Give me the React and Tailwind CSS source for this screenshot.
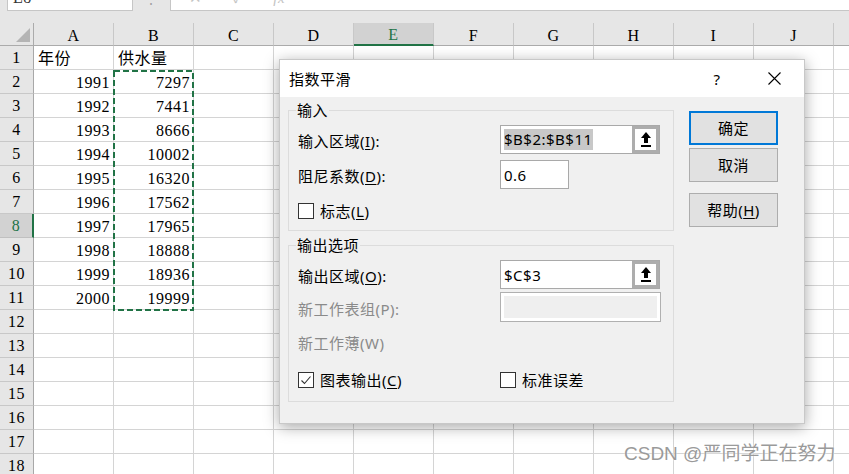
import React from "react";

const COLS = ["A", "B", "C", "D", "E", "F", "G", "H", "I", "J", "K"];
const YEARS = [1991, 1992, 1993, 1994, 1995, 1996, 1997, 1998, 1999, 2000];
const VALUES = [7297, 7441, 8666, 10002, 16320, 17562, 17965, 18888, 18936, 19999];

function cellContent(r, c) {
  if (r === 1 && c === 0) return { t: "年份", left: true };
  if (r === 1 && c === 1) return { t: "供水量", left: true };
  if (r >= 2 && r <= 11 && c === 0) return { t: String(YEARS[r - 2]) };
  if (r >= 2 && r <= 11 && c === 1) return { t: String(VALUES[r - 2]) };
  return null;
}

function Row({ r }) {
  const sel = r === 8;
  return (
    <div className="flex h-[24px] shrink-0">
      <div
        className={
          sel
            ? "w-[34px] shrink-0 flex items-center justify-center bg-[#d2d2d2] text-[#217346] border-b border-b-[#c0c0c0] border-r-2 border-r-[#217346]"
            : "w-[34px] shrink-0 flex items-center justify-center bg-[#e6e6e6] text-black border-b border-b-[#c8c8c8] border-r border-r-[#a8a8a8]"
        }
      >
        {r}
      </div>
      {COLS.map((c, i) => {
        const cc = cellContent(r, i);
        return (
          <div
            key={c}
            className={
              cc && cc.left
                ? "w-[80px] shrink-0 flex items-end justify-start pl-[4px] pb-[1px] border-r border-b border-[#d4d4d4] bg-white"
                : "w-[80px] shrink-0 flex items-end justify-end pr-[3px] pb-[1px] border-r border-b border-[#d4d4d4] bg-white"
            }
          >
            {cc ? cc.t : null}
          </div>
        );
      })}
    </div>
  );
}

function UpButton() {
  return (
    <div className="w-[27px] h-full shrink-0 bg-[#adadad] p-[3px] flex">
      <div className="flex-1 bg-white flex items-center justify-center">
        <svg width="12" height="17" viewBox="0 0 12 17">
          <polygon points="6,1 11,7 1,7" fill="#000" />
          <rect x="4" y="6" width="4" height="6" fill="#000" />
          <rect x="1" y="14" width="10" height="2" fill="#000" />
        </svg>
      </div>
    </div>
  );
}

function CheckBox({ checked }) {
  return (
    <div className="w-[16px] h-[16px] shrink-0 border border-[#333333] bg-white flex items-center justify-center">
      {checked ? (
        <svg width="12" height="12" viewBox="0 0 12 12">
          <polyline points="1.5,6.5 4.5,9.5 10.5,2.5" fill="none" stroke="#333" strokeWidth="1.1" />
        </svg>
      ) : null}
    </div>
  );
}

function Btn({ children, primary }) {
  return (
    <div
      className={
        primary
          ? "w-[89px] h-[34px] bg-[#e1e1e1] border-2 border-[#0078d7] flex items-center justify-center text-[15px] leading-[20px]"
          : "w-[89px] h-[34px] bg-[#e1e1e1] border border-[#adadad] flex items-center justify-center text-[15px] leading-[20px]"
      }
    >
      {children}
    </div>
  );
}

function Dialog() {
  return (
    <div className="absolute left-[279px] top-[59px] w-[526px] h-[365px] border border-[#c8c8c8] bg-[#f0f0f0] shadow-[0_3px_14px_rgba(0,0,0,0.35)] flex flex-col font-['Noto_Sans','Noto_Sans_CJK_SC',sans-serif] text-black">
      <div className="h-[37px] shrink-0 bg-white flex items-center pl-[9px] text-[15px] leading-[20px]">
        <span className="flex-1">指数平滑</span>
        <span className="w-[20px] text-center mr-[41px]">?</span>
        <svg width="13" height="13" viewBox="0 0 13 13" className="mr-[23px]">
          <path d="M0.5 0.5 L12.5 12.5 M12.5 0.5 L0.5 12.5" stroke="#000" strokeWidth="1.1" fill="none" />
        </svg>
      </div>
      <div className="flex pl-[8px] pt-[13px] text-[15px] leading-[20px]">
        <div className="w-[386px] shrink-0 flex flex-col">
          {/* 输入 group */}
          <div className="relative h-[121px] border border-[#dcdcdc] pl-[9px] pt-[14px] flex flex-col">
            <span className="absolute left-[7px] top-[-11px] px-[1px] bg-[#f0f0f0]">输入</span>
            <div className="flex h-[29px] items-center">
              <span className="w-[202px] shrink-0 pt-[3px]">
                输入区域(<span className="underline underline-offset-2">I</span>):
              </span>
              <div className="w-[160px] h-[29px] flex border border-[#a9a9a9] bg-white">
                <div className="flex-1 flex items-center pl-[3px]">
                  <span className="bg-[#c8c8c8] leading-[21px] text-[15px]">$B$2:$B$11</span>
                </div>
                <UpButton />
              </div>
            </div>
            <div className="flex h-[29px] items-center mt-[6px]">
              <span className="w-[202px] shrink-0 pt-[3px]">
                阻尼系数(<span className="underline underline-offset-2">D</span>):
              </span>
              <div className="w-[69px] h-[29px] flex items-center pl-[3px] border border-[#a9a9a9] bg-white">0.6</div>
            </div>
            <div className="flex h-[18px] items-center mt-[13px]">
              <CheckBox />
              <span className="ml-[6px]">
                标志(<span className="underline underline-offset-2">L</span>)
              </span>
            </div>
          </div>
          {/* 输出选项 group */}
          <div className="relative h-[157px] mt-[14px] border border-[#dcdcdc] pl-[9px] pt-[14px] flex flex-col">
            <span className="absolute left-[7px] top-[-11px] px-[1px] bg-[#f0f0f0]">输出选项</span>
            <div className="flex h-[29px] items-center">
              <span className="w-[202px] shrink-0 pt-[3px]">
                输出区域(<span className="underline underline-offset-2">O</span>):
              </span>
              <div className="w-[160px] h-[29px] flex border border-[#a9a9a9] bg-white">
                <div className="flex-1 flex items-center pl-[3px]">$C$3</div>
                <UpButton />
              </div>
            </div>
            <div className="flex h-[30px] items-center mt-[3px]">
              <span className="w-[202px] shrink-0 pt-[3px] text-[#8a8a8a]">新工作表组(P):</span>
              <div className="w-[161px] h-[30px] border border-[#b0b0b0] bg-white p-[3px]">
                <div className="w-full h-full bg-[#efefef]" />
              </div>
            </div>
            <div className="flex h-[29px] items-center mt-[5px]">
              <span className="pt-[3px] text-[#8a8a8a]">新工作薄(W)</span>
            </div>
            <div className="flex h-[18px] items-center mt-[15px]">
              <div className="w-[202px] shrink-0 flex items-center">
                <CheckBox checked />
                <span className="ml-[6px]">
                  图表输出(<span className="underline underline-offset-2">C</span>)
                </span>
              </div>
              <CheckBox />
              <span className="ml-[6px]">标准误差</span>
            </div>
          </div>
        </div>
        <div className="ml-[15px] pt-[1px] flex flex-col">
          <Btn primary>确定</Btn>
          <div className="mt-[3px]">
            <Btn>取消</Btn>
          </div>
          <div className="mt-[11px]">
            <Btn>
              帮助(<span className="underline underline-offset-2">H</span>)
            </Btn>
          </div>
        </div>
      </div>
    </div>
  );
}

export default function App() {
  const rows = Array.from({ length: 18 }, (_, i) => i + 1);
  return (
    <div className="relative w-[849px] h-[474px] overflow-hidden bg-white font-['Liberation_Serif','Noto_Sans_CJK_SC',serif] text-[16px] tracking-[0.5px] leading-[18px] text-black">
      {/* formula bar */}
      <div className="h-[23px] bg-[#e6e6e6] flex items-start">
        <div className="ml-[7px] w-[126px] h-[11px] bg-white border-l border-r border-b border-[#c6c6c6] overflow-hidden">
          <div className="-mt-[11px] pl-[5px] text-[16px] text-[#333]">E8</div>
        </div>
        <div className="w-[37px] h-[11px] overflow-hidden flex justify-center">
          <div className="-mt-[9px] text-[#a0a0a0] text-[14px]">⋮</div>
        </div>
        <div className="flex-1 h-[11px] bg-white border-l border-b border-[#c6c6c6] overflow-hidden flex gap-[30px] pl-[18px] text-[#c4c4c4] text-[15px]">
          <span className="-mt-[11px]">✕</span>
          <span className="-mt-[11px]">✓</span>
          <span className="-mt-[11px] italic">fx</span>
        </div>
      </div>
      {/* column headers */}
      <div className="flex h-[23px] bg-[#e6e6e6]">
        <div className="w-[34px] shrink-0 h-[23px] border-b border-r border-[#ababab] flex items-end justify-end pr-[3px] pb-[3px]">
          <svg width="14" height="14" viewBox="0 0 14 14">
            <polygon points="14,0 14,14 0,14" fill="#b4b4b4" />
          </svg>
        </div>
        {COLS.map((c) => (
          <div
            key={c}
            className={
              c === "E"
                ? "w-[80px] shrink-0 h-[23px] bg-[#d2d2d2] border-r border-r-[#c8c8c8] border-b-2 border-b-[#217346] text-[#217346] flex items-center justify-center pt-[3px]"
                : "w-[80px] shrink-0 h-[23px] border-r border-r-[#c8c8c8] border-b border-b-[#ababab] flex items-center justify-center pt-[3px]"
            }
          >
            {c}
          </div>
        ))}
      </div>
      {/* rows */}
      <div className="flex flex-col">
        {rows.map((r) => (
          <Row key={r} r={r} />
        ))}
      </div>
      {/* copy marquee */}
      <svg className="absolute left-[113px] top-[70px]" width="81" height="241" viewBox="0 0 81 241">
        <rect x="1" y="1" width="79" height="239" fill="none" stroke="#217346" strokeWidth="2" strokeDasharray="6 3" />
      </svg>
      <Dialog />
      <div className="absolute left-[624px] top-[442px] text-[19px] leading-[24px] tracking-normal text-[#9a9a9a] font-['Liberation_Sans','Noto_Sans_CJK_SC',sans-serif] [text-shadow:0_0_2px_#ffffff]">
        CSDN @严同学正在努力
      </div>
    </div>
  );
}
